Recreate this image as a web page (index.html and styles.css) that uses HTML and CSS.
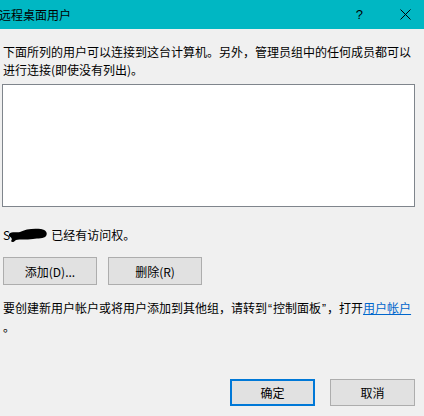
FILE: index.html
```html
<!DOCTYPE html>
<html lang="zh-CN">
<head>
    <meta charset="UTF-8">
    <title>远程桌面用户</title>
    <link rel="stylesheet" href="styles.css">
</head>
<body>
    <div class="dialog">
        <div class="titlebar">
            <span class="title">远程桌面用户</span>
            <span class="help">?</span>
            <svg class="close" width="11" height="11" viewBox="0 0 11 11">
                <path d="M0.5 0.5 L10.5 10.5 M10.5 0.5 L0.5 10.5" stroke="#000" stroke-width="1" fill="none"/>
            </svg>
        </div>

        <div class="content">
            <p class="intro">下面所列的用户可以连接到这台计算机。另外，管理员组中的任何成员都可以<br>进行连接(即使没有列出)。</p>

            <div class="user-list"></div>

            <p class="access">
                <span class="user">S<svg class="redact" width="40" height="16" viewBox="0 0 40 16">
                    <path d="M1 7 C4 4 9 6 12 5 C17 2 26 1 33 2 C38 3 40 6 38 9 C36 12 30 11 25 12 C18 13 12 12 8 13 C6 15 4 16 3 14 C5 12 3 10 1 9 Z" fill="#000"/>
                </svg></span>已经有访问权。
            </p>

            <div class="actions">
                <button class="btn wide">添加(D)...</button>
                <button class="btn wide">删除(R)</button>
            </div>

            <p class="hint">要创建新用户帐户或将用户添加到其他组，请转到<span class="q">“</span>控制面板<span class="q">”</span>，打开<a href="#">用户帐户</a><br>。</p>

            <div class="footer">
                <button class="btn primary">确定</button>
                <button class="btn">取消</button>
            </div>
        </div>
    </div>
</body>
</html>
```

FILE: styles.css
```css
* {
    box-sizing: border-box;
    margin: 0;
    padding: 0;
}

body {
    font-family: "Noto Sans CJK SC", "Noto Sans", sans-serif;
    font-size: 12px;
    line-height: 18px;
    color: #000;
    background-color: #f0f0f0;
}

.dialog {
    width: 424px;
    height: 416px;
    display: flex;
    flex-direction: column;
}

.titlebar {
    height: 29px;
    background-color: #00b7c3;
    display: flex;
    align-items: center;
    padding-right: 13px;
}

.title {
    font-size: 12px;
    margin-left: -1px;
}

.help {
    margin-left: auto;
    font-family: "Liberation Sans", sans-serif;
    font-size: 13px;
    margin-right: 37px;
}

.close {
    display: block;
}

.content {
    flex: 1;
    display: flex;
    flex-direction: column;
    padding: 14px 9px 10px 3px;
}

.intro {
    white-space: nowrap;
}

.user-list {
    height: 123px;
    margin: 5px 0 0 -1px;
    background-color: #fff;
    border: 1px solid #7f858c;
}

.access {
    margin-top: 19px;
    display: flex;
    align-items: center;
}

.user {
    display: flex;
    align-items: center;
    margin-right: 3px;
}

.redact {
    display: block;
    margin-left: -2px;
}

.actions {
    display: flex;
    gap: 11px;
    margin-top: 13px;
}

.btn {
    font-family: inherit;
    font-size: 12px;
    color: #000;
    background-color: #e1e1e1;
    border: 1px solid #adadad;
    height: 27px;
    width: 85px;
}

.btn.wide {
    width: 94px;
    height: 28px;
}

.btn.primary {
    border: 2px solid #0078d7;
}

.hint {
    margin-top: 14px;
    white-space: nowrap;
}

.q {
    font-family: "Liberation Sans", sans-serif;
    padding: 0 1px;
}

.hint a {
    color: #0066cc;
}

.footer {
    display: flex;
    justify-content: flex-end;
    gap: 15px;
    margin-top: auto;
}
```
